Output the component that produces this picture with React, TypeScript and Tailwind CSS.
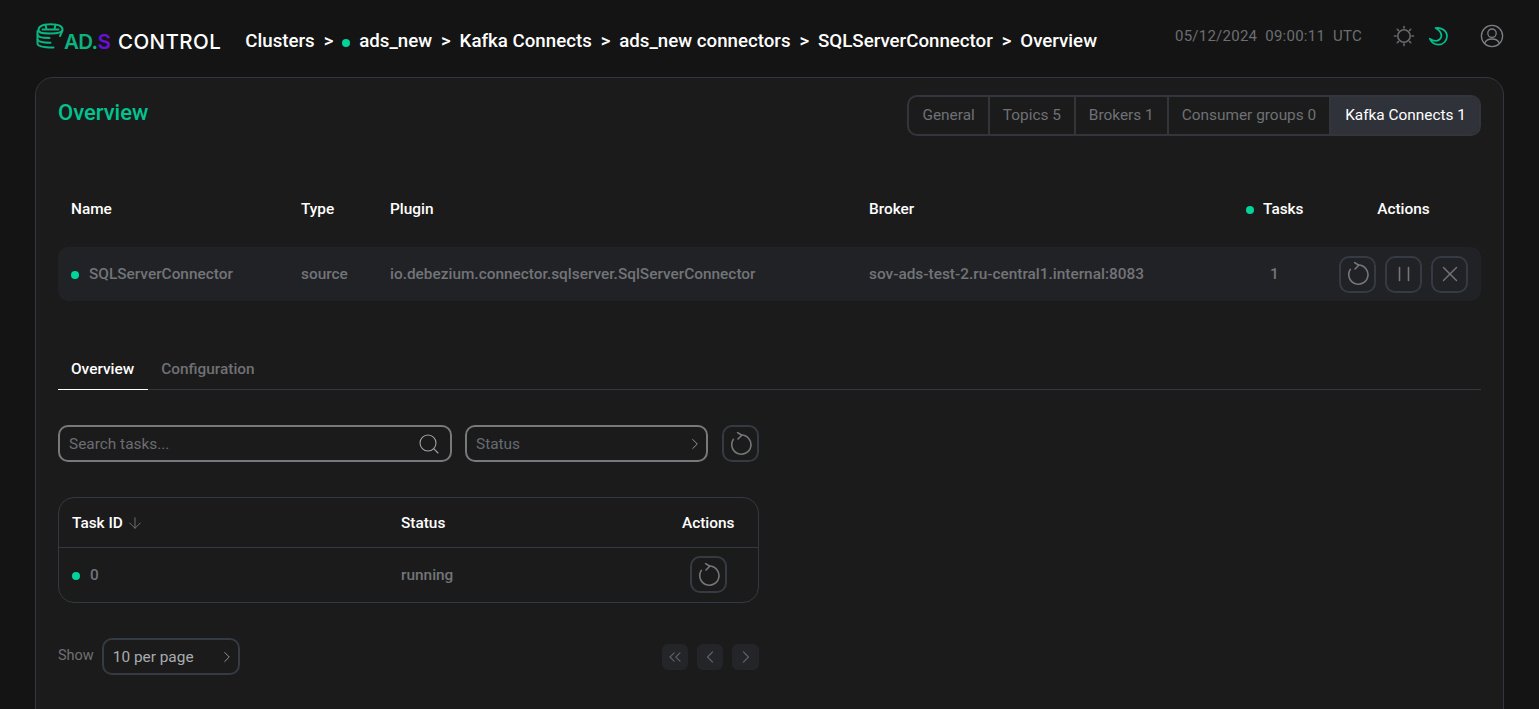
import { ArrowDown, ChevronLeft, ChevronRight, ChevronsLeft, Search, X } from "lucide-react";

const CRUMBS = ["ads_new", "Kafka Connects", "ads_new connectors", "SQLServerConnector", "Overview"];
const TABS = ["General", "Topics 5", "Brokers 1", "Consumer groups 0"];

function Dot() {
  return <span className="inline-block h-2 w-2 shrink-0 rounded-full bg-[#00d49b]" />;
}

function RefreshIcon() {
  return (
    <svg width="24" height="24" viewBox="0 0 24 24" fill="none" stroke="#74767b" strokeWidth="1.6" strokeLinecap="round" strokeLinejoin="round">
      <path d="M12.6 3A9.6 9.6 0 1 1 4.3 7.4" />
      <path d="M8.6 0.6 12.8 3.2 9 7" />
    </svg>
  );
}

function PauseIcon() {
  return (
    <svg width="24" height="24" viewBox="0 0 24 24" fill="none" stroke="#74767b" strokeWidth="1.6" strokeLinecap="round">
      <path d="M7.5 5.5v13M16.5 5.5v13" />
    </svg>
  );
}

function IconButton({ children }: { children: React.ReactNode }) {
  return (
    <button className="flex h-[37px] w-[37px] items-center justify-center rounded-[10px] border-2 border-[#353a43]">
      {children}
    </button>
  );
}

function PagerButton({ children, className }: { children: React.ReactNode; className?: string }) {
  return <button className={"flex h-[26px] items-center justify-center rounded-md bg-[#242528] text-[#5a5d64] " + (className ?? "w-[26px]")}>{children}</button>;
}

function Logo() {
  return (
    <div className="flex items-end">
      <svg className="-ml-[1px]" width="32" height="27" viewBox="0 0 31 27" fill="none" stroke="#0bb481" strokeWidth="2" strokeLinecap="round" strokeLinejoin="round">
        <path d="M3 7C3 3 8 1.2 15 1.2S27 3 27 6.5 21 10.5 15 10.5 3 10.5 3 7Z" />
        <path d="M10 1.8 11 6.3M20 1.8 19 6.3M7 6.5h16" />
        <path d="M2 8v3.5C2 14 7 15 14 15" />
        <path d="M2 12v4C2 18.5 7 19.7 15 19.7" />
        <path d="M2 16.5v4C2 23.5 7 24.5 18 24.5" />
        <path d="M27 7.5 24.5 13" />
      </svg>
      <div className="-mb-[2px] -ml-[3px] flex items-center font-['Inter',sans-serif] text-[20.5px] leading-none font-medium">
        <span className="font-semibold tracking-[-0.6px] text-[#0bb481]">AD.</span>
        <span className="font-semibold text-[#6a0fd8]">S</span>
        <span className="ml-[7px] tracking-[0.45px] text-white">CONTROL</span>
      </div>
    </div>
  );
}

export default function App() {
  return (
    <div className="h-screen overflow-hidden bg-[#141414] font-['Roboto',sans-serif] text-[15.4px] text-white">
      {/* Top bar */}
      <header className="flex h-[77px] items-start pt-[23px] pl-9">
        <Logo />
        <nav className="mt-[7px] ml-[24px] flex h-[22px] items-center text-[18.7px] leading-[22px] font-medium text-white">
          <span>Clusters</span>
          {CRUMBS.map((c, i) => (
            <span key={c} className="flex items-center">
              <span className="mx-[8.9px]">&gt;</span>
              {i === 0 && <span className="mr-[9px]"><Dot /></span>}
              {c}
            </span>
          ))}
        </nav>
        <div className="mt-[1px] ml-auto flex h-6 items-center pr-[35px]">
          <span className="text-[15px] tracking-[0.25px] text-[#6c6e72]">05/12/2024&nbsp; 09:00:11&nbsp; UTC</span>
          <svg className="ml-[31px]" width="22" height="22" viewBox="0 0 22 22" fill="none" stroke="#66686c" strokeWidth="1.6" strokeLinecap="round">
            <circle cx="11" cy="11" r="6.2" />
            <path d="M11 1.5v1.6M11 18.9v1.6M1.5 11h1.6M18.9 11h1.6M4.3 4.3l1.1 1.1M16.6 16.6l1.1 1.1M4.3 17.7l1.1-1.1M16.6 5.4l1.1-1.1" />
          </svg>
          <svg className="ml-[13px]" width="20" height="20" viewBox="0 0 20 20" fill="none" stroke="#00c08c" strokeWidth="1.7" strokeLinecap="round" strokeLinejoin="round">
            <path d="M7.5 2C13.5 1 19 5 19 10.3 19 15 15 18.7 10.5 18.7 6.5 18.7 3.5 16.5 1.7 12.7 5 15 9 15.5 11.5 13.5 14.5 11 14.5 6 7.5 2Z" />
          </svg>
          <svg className="ml-[32px]" width="24" height="24" viewBox="0 0 24 24" fill="none" stroke="#7d7f84" strokeWidth="1.3" strokeLinecap="round">
            <circle cx="12" cy="12" r="10.6" />
            <circle cx="12" cy="9.2" r="4.2" />
            <path d="M4.6 19.6c1-3.2 3.8-4.6 7.4-4.6s6.4 1.4 7.4 4.6" />
          </svg>
        </div>
      </header>

      <main className="mx-[35px] min-h-[700px] rounded-t-[18px] border border-[#33363d] bg-[#1b1b1b] px-[22px] pt-[17px]">
        <div className="flex items-start justify-between">
          <h1 className="mt-[3px] text-[22px] leading-[30px] font-medium text-[#00c48f]">Overview</h1>
          <div className="flex h-[41px] overflow-hidden rounded-[10px] border-2 border-[#33353b] text-[#6f7175]">
            {TABS.map((t) => (
              <span key={t} className="flex items-center border-r-2 border-[#33353b] px-[13px]">{t}</span>
            ))}
            <span className="flex items-center bg-[#30323a] pr-[13px] pl-[14px] text-white">Kafka Connects 1</span>
          </div>
        </div>

        {/* Connector table */}
        <div className="mt-[54px] grid h-[38px] grid-cols-[230px_89px_479px_377px_93px_129px] items-center pt-[2px] pl-[13px] font-medium">
          <span>Name</span>
          <span>Type</span>
          <span>Plugin</span>
          <span>Broker</span>
          <span className="flex items-center gap-[9px]"><Dot />Tasks</span>
          <span className="text-center">Actions</span>
        </div>
        <div className="mt-[19px] grid h-[54px] grid-cols-[230px_89px_479px_377px_93px_129px] items-center rounded-[10px] bg-[#212225] pl-[13px] font-medium text-[#727478]">
          <span className="flex items-center gap-[10px] pt-[2px]"><Dot />SQLServerConnector</span>
          <span className="pt-[2px]">source</span>
          <span className="pt-[2px]">io.debezium.connector.sqlserver.SqlServerConnector</span>
          <span className="pt-[2px]">sov-ads-test-2.ru-central1.internal:8083</span>
          <span className="pt-[2px] pl-[24px]">1</span>
          <div className="flex gap-[9px]">
            <IconButton><RefreshIcon /></IconButton>
            <IconButton><PauseIcon /></IconButton>
            <IconButton><X size={26} strokeWidth={1.3} color="#74767b" /></IconButton>
          </div>
        </div>

        {/* Inner tabs */}
        <div className="mt-[48px] flex h-[41px] border-b border-[#33363d] font-medium">
          <span className="-mb-px flex items-center border-b border-white pt-[2px] pr-[14px] pl-[13px]">Overview</span>
          <span className="flex items-center px-[13px] pt-[2px] text-[#6f7175]">Configuration</span>
        </div>

        {/* Filters */}
        <div className="mt-[35px] flex w-[701px] items-center">
          <div className="flex h-[37px] w-[394px] items-center justify-between rounded-[10px] border-2 border-[#77797d] pr-[9px] pl-[9px] text-[#6b6d72]">
            <span className="pt-[2px]">Search tasks...</span>
            <Search size={24} strokeWidth={1.1} color="#a0a2a6" />
          </div>
          <div className="ml-[13px] flex h-[37px] w-[243px] items-center justify-between rounded-[10px] border-2 border-[#77797d] pr-[2px] pl-[9px] text-[#666b73]">
            <span className="pt-[2px]">Status</span>
            <ChevronRight size={18} strokeWidth={1.2} color="#a0a2a6" />
          </div>
          <div className="ml-auto"><IconButton><RefreshIcon /></IconButton></div>
        </div>

        {/* Task table */}
        <div className="mt-[35px] w-[701px] rounded-[16px] border border-[#33393f]">
          <div className="grid h-[50px] grid-cols-[329px_281px_1fr] items-center border-b border-[#33393f] pt-[2px] pl-[13px] font-medium">
            <span className="flex items-center gap-[3px]">Task ID <ArrowDown size={18} strokeWidth={1.2} color="#74767b" /></span>
            <span>Status</span>
            <span>Actions</span>
          </div>
          <div className="grid h-[54px] grid-cols-[329px_289px_1fr] items-center pl-[13px] font-medium text-[#727478]">
            <span className="flex items-center gap-[10px] pt-[2px]"><Dot />0</span>
            <span className="pt-[2px]">running</span>
            <div className="-mt-[1px]"><IconButton><RefreshIcon /></IconButton></div>
          </div>
        </div>

        {/* Pagination */}
        <div className="mt-[35px] flex w-[701px] items-center justify-between">
          <div className="flex items-center gap-[8px]">
            <span className="-mt-[2px] text-[14.5px] text-[#6f7175]">Show</span>
            <div className="flex h-[37px] w-[138px] items-center justify-between rounded-[10px] border-2 border-[#353a43] pr-[2px] pl-[9px] text-[#a9abaf]">
              <span className="pt-[2px]">10 per page</span>
              <ChevronRight size={18} strokeWidth={1.2} color="#a0a2a6" />
            </div>
          </div>
          <div className="flex gap-[9px]">
            <PagerButton><ChevronsLeft size={20} strokeWidth={1.5} /></PagerButton>
            <PagerButton><ChevronLeft size={20} strokeWidth={1.5} /></PagerButton>
            <PagerButton className="w-[27px]"><ChevronRight size={20} strokeWidth={1.5} /></PagerButton>
          </div>
        </div>
      </main>
    </div>
  );
}
